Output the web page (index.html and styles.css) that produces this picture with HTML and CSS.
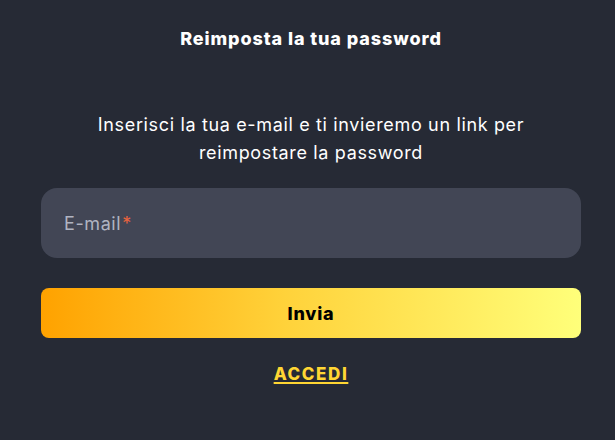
FILE: index.html
```html
<!DOCTYPE html>
<html lang="it">
<head>
<meta charset="utf-8">
<link rel="stylesheet" href="styles.css">
</head>
<body>
<main class="panel">
  <h1 class="title">Reimposta la tua password</h1>
  <p class="desc">Inserisci la tua e-mail e ti invieremo un link per reimpostare la password</p>
  <label class="field">
    <span class="label">E-mail<span class="req">*</span></span>
  </label>
  <button class="submit" type="button">Invia</button>
  <a class="login" href="#">ACCEDI</a>
</main>
</body>
</html>
```

FILE: styles.css
```css
html, body {
  margin: 0;
  padding: 0;
  background: #262a35;
  height: 100%;
}
body {
  font-family: Inter, "Noto Sans", sans-serif;
  color: #fff;
}
.panel {
  padding: 26px 34px 0 41px;
  display: flex;
  flex-direction: column;
  align-items: stretch;
}
.title {
  margin: 0;
  font-size: 18px;
  font-weight: 800;
  text-align: center;
  line-height: 26px;
  letter-spacing: 0.9px;
}
.desc {
  margin: 59px 30px 0;
  font-size: 18px;
  line-height: 28px;
  text-align: center;
  font-weight: 400;
  letter-spacing: 0.65px;
}
.field {
  margin-top: 21px;
  height: 70px;
  border-radius: 16px;
  background: #424655;
  display: flex;
  align-items: center;
  padding-left: 23px;
}
.label {
  font-size: 18px;
  color: #b0b4c1;
  letter-spacing: 0.6px;
}
.req {
  color: #ea633e;
  margin-left: 1px;
}
.submit {
  margin-top: 30px;
  height: 50px;
  border: 0;
  border-radius: 8px;
  background: linear-gradient(90deg, #ffa200 0%, #ffd23a 45%, #ffff7a 100%);
  font-family: inherit;
  font-size: 18px;
  font-weight: 800;
  color: #000;
  letter-spacing: 0.8px;
}
.login {
  margin-top: 25px;
  align-self: center;
  color: #ffd633;
  font-size: 17px;
  font-weight: 800;
  text-decoration: underline;
  text-underline-offset: 2px;
  text-decoration-thickness: 2px;
  line-height: 22px;
  letter-spacing: 1.6px;
}
```
